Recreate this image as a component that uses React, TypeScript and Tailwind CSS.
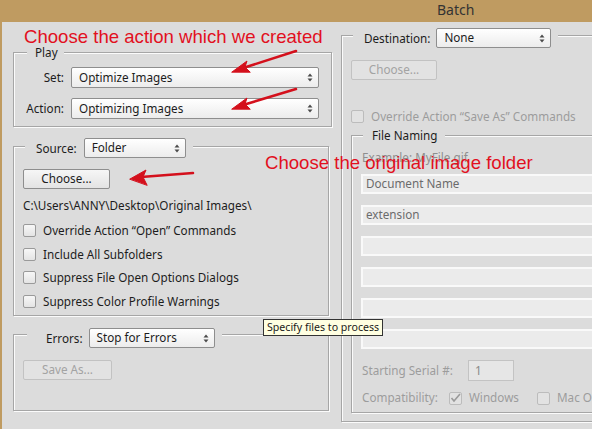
import React from "react";

const UI = { fontFamily: '"Noto Sans", "Open Sans", Arial, sans-serif' };
const RED = { fontFamily: '"Liberation Sans", Arial, sans-serif' };

function Arrows() {
  return (
    <svg width="6" height="9" viewBox="0 0 6 9" className="shrink-0">
      <path d="M0.5 3.5 L3 0.5 L5.5 3.5 Z" fill="#4a4a4a" />
      <path d="M0.5 5.5 L3 8.5 L5.5 5.5 Z" fill="#4a4a4a" />
    </svg>
  );
}

function Select({ text, className }: { text: string; className: string }) {
  return (
    <div
      className={
        "flex items-center justify-between border border-[#8e8e8e] rounded-[2px] bg-gradient-to-b from-white to-[#ececec] pl-[7px] pr-[5px] text-[11.7px] text-[#1c1c1c] " +
        className
      }
    >
      <span>{text}</span>
      <Arrows />
    </div>
  );
}

function Button({ text, disabled, className }: { text: string; disabled?: boolean; className: string }) {
  return (
    <div
      className={
        "flex items-center justify-center rounded-[2px] text-[11.7px] border " +
        (disabled
          ? "border-[#c2c2c2] bg-[#e2e2e2] text-[#a3a3a3] "
          : "border-[#8e8e8e] bg-gradient-to-b from-[#f6f6f6] to-[#e3e3e3] text-[#1c1c1c] ") +
        className
      }
    >
      {text}
    </div>
  );
}

function Check({ disabled, checked }: { disabled?: boolean; checked?: boolean }) {
  return (
    <div
      className={
        "w-[13px] h-[13px] shrink-0 rounded-[2px] border flex items-center justify-center " +
        (disabled
          ? "border-[#bcbcbc] bg-[#e2e2e2]"
          : "border-[#9a9a9a] bg-gradient-to-b from-[#f7f7f7] to-[#e4e4e4]")
      }
    >
      {checked && (
        <svg width="11" height="10" viewBox="0 0 11 10">
          <path d="M1.5 5 L4 8 L10 1" stroke="#9a9a9a" strokeWidth="1.6" fill="none" />
        </svg>
      )}
    </div>
  );
}

const FS = "border border-[#a6a6a6] shadow-[inset_1px_1px_0_#fbfbfb,1px_1px_0_#fbfbfb] min-w-0";

export default function App() {
  return (
    <div className="relative w-[592px] h-[429px] overflow-hidden bg-[#bf9b61]" style={UI}>
      {/* Title bar */}
      <div className="h-[22px] pl-[437px] text-[14px] leading-[20px] text-[#333]">Batch</div>

      {/* Body */}
      <div className="ml-[2px] h-[407px] bg-[#dcdcdc] flex">
        {/* Left column */}
        <div className="w-[339px] shrink-0 pl-[11px] pt-[23px] flex flex-col">
          {/* Play */}
          <fieldset className={FS + " w-[319px] px-0 pt-[7px] pb-[7px]"}>
            <legend className="ml-[13px] pl-[8px] pr-[6px] h-[15px] text-[11.7px] leading-[15px] text-[#1c1c1c] bg-[#dcdcdc]">
              Play
            </legend>
            <div className="flex flex-col gap-[10px]">
              <div className="flex items-center">
                <div className="w-[50px] text-right text-[11.7px] text-[#1c1c1c]">Set:</div>
                <Select text="Optimize Images" className="ml-[7px] w-[248px] h-[21px]" />
              </div>
              <div className="flex items-center">
                <div className="w-[50px] text-right text-[11.7px] text-[#1c1c1c]">Action:</div>
                <Select text="Optimizing Images" className="ml-[7px] w-[248px] h-[21px]" />
              </div>
            </div>
          </fieldset>

          {/* Source */}
          <fieldset className={FS + " w-[316px] mt-[11px] px-0 pt-[14px] pb-[7px]"}>
            <legend className="ml-[11px] pl-[11px] pr-[7px] h-[17px] flex items-start bg-[#dcdcdc]">
              <span className="text-[11.7px] leading-[20px] text-[#1c1c1c]">Source:</span>
              <Select text="Folder" className="ml-[7px] w-[102px] h-[20px]" />
            </legend>
            <div className="pl-[9px] flex flex-col">
              <Button text="Choose..." className="w-[87px] h-[20px]" />
              <div className="mt-[9px] text-[11.7px] leading-[15px] text-[#1c1c1c]">
                C:\Users\ANNY\Desktop\Original Images\
              </div>
              <div className="mt-[11px] flex flex-col gap-[10.7px] text-[11.7px] text-[#1c1c1c]">
                {[
                  "Override Action \u201cOpen\u201d Commands",
                  "Include All Subfolders",
                  "Suppress File Open Options Dialogs",
                  "Suppress Color Profile Warnings",
                ].map((t) => (
                  <div key={t} className="h-[13px] flex items-center gap-[7px]">
                    <Check />
                    <span className="leading-[15px]">{t}</span>
                  </div>
                ))}
              </div>
            </div>
          </fieldset>

          {/* Errors */}
          <fieldset className={FS + " w-[316px] mt-[12px] px-0 pt-[20px] pb-[30px]"}>
            <legend className="ml-[13px] pl-[19px] pr-[7px] h-[12px] flex items-start bg-[#dcdcdc]">
              <span className="text-[11.7px] leading-[20px] text-[#1c1c1c]">Errors:</span>
              <Select text="Stop for Errors" className="ml-[6px] w-[126px] h-[20px]" />
            </legend>
            <div className="pl-[9px]">
              <Button text="Save As..." disabled className="w-[89px] h-[20px]" />
            </div>
          </fieldset>
        </div>

        {/* Right column */}
        <div className="pt-[6px] shrink-0">
          <fieldset className={FS + " w-[400px] px-0 pt-[17px] pb-[8px]"}>
            <legend className="ml-[11px] pl-[11px] pr-[7px] h-[15px] flex items-start bg-[#dcdcdc]">
              <span className="text-[11.7px] leading-[20px] text-[#1c1c1c]">Destination:</span>
              <Select text="None" className="ml-[6px] w-[115px] h-[20px]" />
            </legend>
            <div className="pl-[9px] flex flex-col">
              <Button text="Choose..." disabled className="w-[86px] h-[20px]" />
              <div className="mt-[30px] h-[13px] flex items-center gap-[7px] text-[11.7px] text-[#9c9c9c]">
                <Check disabled />
                <span className="leading-[15px]">Override Action &ldquo;Save As&rdquo; Commands</span>
              </div>

              {/* File Naming */}
              <fieldset className={FS + " mt-[5px] w-[380px] px-0 pt-[7px] pb-[4px]"}>
                <legend className="ml-[11px] pl-[9px] pr-[7px] h-[15px] text-[11.7px] leading-[15px] text-[#1c1c1c] bg-[#dcdcdc]">
                  File Naming
                </legend>
                <div className="pl-[9px] flex flex-col">
                  <div className="ml-[1px] text-[11.7px] leading-[15px] text-[#8e8e8e]">Example: MyFile.gif</div>
                  <div className="mt-[9px] flex flex-col gap-[11px]">
                    {["Document Name", "extension", "", "", "", ""].map((t, i) => (
                      <div
                        key={i}
                        className="h-[20px] w-[300px] border-2 border-[#f9f9f9] bg-[#ebebeb] pl-[3px] flex items-center text-[11.7px] text-[#6b6b6b]"
                      >
                        {t}
                      </div>
                    ))}
                  </div>
                  <div className="mt-[11px] flex items-center text-[11.7px] text-[#9c9c9c]">
                    <span className="ml-[1px] w-[106px]">Starting Serial #:</span>
                    <div className="w-[46px] h-[21px] border border-[#c3c3c3] bg-[#e6e6e6] pl-[6px] flex items-center text-[#8a8a8a]">
                      1
                    </div>
                  </div>
                  <div className="mt-[7px] h-[20px] flex items-center text-[11.7px] text-[#9c9c9c]">
                    <span className="ml-[1px] w-[87px]">Compatibility:</span>
                    <Check disabled checked />
                    <span className="ml-[7px] w-[68px]">Windows</span>
                    <Check disabled />
                    <span className="ml-[7px]">Mac OS</span>
                  </div>
                </div>
              </fieldset>
            </div>
          </fieldset>
        </div>
      </div>

      {/* Annotations */}
      <div
        className="absolute left-[24px] top-[26px] text-[18.6px] leading-[22px] text-[#e2101e] whitespace-nowrap"
        style={RED}
      >
        Choose the action which we created
      </div>
      <div
        className="absolute left-[265px] top-[152px] text-[18.6px] leading-[22px] text-[#e2101e] whitespace-nowrap"
        style={RED}
      >
        Choose the original image folder
      </div>
      <svg className="absolute left-0 top-0 pointer-events-none" width="592" height="429">
        <g stroke="#d4101c" strokeWidth="2.5" fill="#d4101c" strokeLinecap="round">
          <line x1="296" y1="51" x2="243" y2="68" />
          <path d="M232 72 L247 61 L245 67 L250 72 Z" strokeWidth="1" />
          <line x1="296" y1="89" x2="243" y2="105" />
          <path d="M232 109 L247 98 L245 104 L250 109 Z" strokeWidth="1" />
          <line x1="193" y1="173" x2="141" y2="177" />
          <path d="M130 179 L146 170 L143 177 L147 185 Z" strokeWidth="1" />
        </g>
      </svg>

      {/* Tooltip */}
      <div className="absolute left-[263px] top-[319px] h-[17px] px-[3px] border border-[#333] bg-[#ffffe1] text-[10.6px] leading-[15px] text-[#1a1a1a] whitespace-nowrap">
        Specify files to process
      </div>
    </div>
  );
}
